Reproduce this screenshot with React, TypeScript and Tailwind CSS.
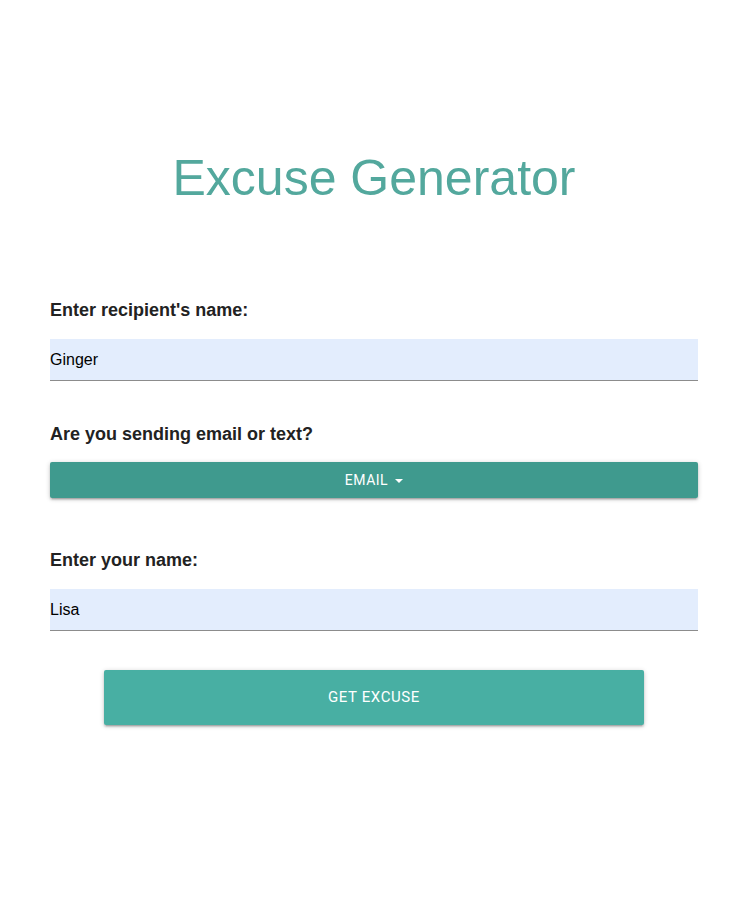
export default function App() {
  const labelCls = "text-[18px] leading-[24px] font-bold text-[#222] font-['Liberation_Sans',Arial,sans-serif]"
  const inputCls =
    "w-full h-[42px] bg-[#e3edfd] border-b border-[#8c8c8c] text-[16px] text-black outline-none font-['Liberation_Sans',Arial,sans-serif] p-0"

  return (
    <div className="min-h-[917px] w-full bg-white">
      <div className="w-[648px] mx-auto pt-[149px]">
        <h1 className="text-center text-[50px] leading-[58px] text-[#53a89d] font-['Liberation_Sans',Arial,sans-serif]">
          Excuse Generator
        </h1>

        <form className="mt-[91px] flex flex-col" onSubmit={(e) => e.preventDefault()}>
          <label className={labelCls}>Enter recipient's name:</label>
          <input className={`${inputCls} mt-[17px]`} defaultValue="Ginger" />

          <label className={`${labelCls} mt-[41px]`}>Are you sending email or text?</label>
          <button
            type="button"
            className="mt-[16px] h-[36px] w-full rounded-[2px] bg-[#3f9a8e] text-white text-[14px] tracking-[0.5px] font-['Roboto',sans-serif] flex items-center justify-center gap-[7px] shadow-[0_2px_2px_0_rgba(0,0,0,0.14),0_3px_1px_-2px_rgba(0,0,0,0.12),0_1px_5px_0_rgba(0,0,0,0.2)]"
          >
            EMAIL
            <svg width="8" height="4" viewBox="0 0 8 4" className="mt-[1px]">
              <path d="M0 0h8L4 4z" fill="white" />
            </svg>
          </button>

          <label className={`${labelCls} mt-[50px]`}>Enter your name:</label>
          <input className={`${inputCls} mt-[17px]`} defaultValue="Lisa" />

          <button
            type="submit"
            className="mt-[39px] self-center h-[55px] w-[540px] rounded-[2px] bg-[#48afa3] text-white text-[15px] tracking-[0.6px] font-['Roboto',sans-serif] shadow-[0_2px_2px_0_rgba(0,0,0,0.14),0_3px_1px_-2px_rgba(0,0,0,0.12),0_1px_5px_0_rgba(0,0,0,0.2)]"
          >
            GET EXCUSE
          </button>
        </form>
      </div>
    </div>
  )
}
